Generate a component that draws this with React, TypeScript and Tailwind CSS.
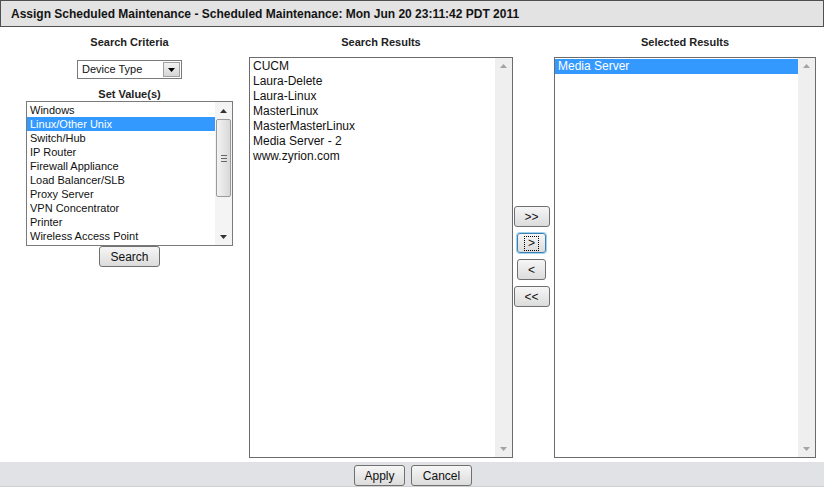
const deviceTypes = [
  "Windows",
  "Linux/Other Unix",
  "Switch/Hub",
  "IP Router",
  "Firewall Appliance",
  "Load Balancer/SLB",
  "Proxy Server",
  "VPN Concentrator",
  "Printer",
  "Wireless Access Point",
]

const searchResults = [
  "CUCM",
  "Laura-Delete",
  "Laura-Linux",
  "MasterLinux",
  "MasterMasterLinux",
  "Media Server - 2",
  "www.zyrion.com",
]

function Arrow({ up, color }: { up?: boolean; color: string }) {
  return (
    <svg width="7" height="4" viewBox="0 0 7 4">
      <polygon points={up ? "0,4 7,4 3.5,0" : "0,0 7,0 3.5,4"} fill={color} />
    </svg>
  )
}

function Button({ label, className = "", focused = false }: { label: string; className?: string; focused?: boolean }) {
  return (
    <button
      className={`flex items-center justify-center rounded-[3px] border bg-gradient-to-b from-[#f6f6f6] to-[#dcdcdc] text-[12px] text-[#111] ${
        focused ? "border-[#3c7fb1] shadow-[0_0_0_1px_#9dd2f0]" : "border-[#707070]"
      } ${className}`}
    >
      {focused ? <span className="border border-dotted border-black px-[3px] leading-[13px]">{label}</span> : label}
    </button>
  )
}

function BigList({ items, selected }: { items: string[]; selected?: number }) {
  return (
    <div className="flex h-[401px] border border-[#6b6b6b] bg-white">
      <div className="flex-1 pt-[1px] text-[12px] leading-[15px] text-[#111]">
        {items.map((item, i) => (
          <div key={item} className={`px-[3px] ${i === selected ? "bg-[#3399ff] text-white" : ""}`}>
            {item}
          </div>
        ))}
      </div>
      <div className="flex w-[17px] flex-col items-center justify-between bg-[#efefef] py-[6px]">
        <Arrow up color="#a3a3a3" />
        <Arrow color="#a3a3a3" />
      </div>
    </div>
  )
}

export default function App() {
  return (
    <div className="flex h-[487px] w-[824px] flex-col bg-white font-['Liberation_Sans',Arial,sans-serif] text-[#111]">
      <div className="flex h-[27px] items-center border border-[#4f4f4f] bg-[#e3e3e3] px-[10px] text-[12px] font-bold text-[#141414]">
        Assign Scheduled Maintenance - Scheduled Maintenance: Mon Jun 20 23:11:42 PDT 2011
      </div>

      <div className="flex flex-1 pl-[26px]">
        <div className="flex w-[207px] flex-col items-center">
          <div className="mt-[8px] text-[11px] font-bold leading-[14px] text-[#222]">Search Criteria</div>
          <div className="mt-[11px] flex h-[19px] w-[105px] items-center border border-[#7a7a7a] bg-white pl-[4px] text-[11px]">
            <span className="flex-1">Device Type</span>
            <span className="mr-[1px] flex h-[15px] w-[17px] items-center justify-center border border-[#a0a0a0] bg-gradient-to-b from-[#f2f2f2] to-[#d6d6d6]">
              <Arrow color="#000" />
            </span>
          </div>
          <div className="mt-[8px] text-[11px] font-bold leading-[14px] text-[#222]">Set Value(s)</div>
          <div className="flex h-[145px] w-[207px] border border-[#7a7a7a] bg-white">
            <div className="flex-1 pt-[1px] text-[11px] leading-[14px]">
              {deviceTypes.map((item, i) => (
                <div key={item} className={`px-[3px] ${i === 1 ? "bg-[#3399ff] text-white" : ""}`}>
                  {item}
                </div>
              ))}
            </div>
            <div className="flex w-[17px] flex-col items-center bg-[#f4f4f4]">
              <div className="flex h-[17px] items-center">
                <Arrow up color="#333" />
              </div>
              <div className="flex h-[78px] w-[15px] flex-col items-center justify-center gap-[2px] rounded-[2px] border border-[#9a9a9a] bg-gradient-to-r from-[#f3f3f3] to-[#d9d9d9]">
                <span className="h-px w-[6px] bg-[#666]" />
                <span className="h-px w-[6px] bg-[#666]" />
                <span className="h-px w-[6px] bg-[#666]" />
              </div>
              <div className="flex-1" />
              <div className="flex h-[17px] items-center">
                <Arrow color="#333" />
              </div>
            </div>
          </div>
          <Button label="Search" className="h-[21px] w-[61px]" />
        </div>

        <div className="ml-[16px] flex w-[264px] flex-col">
          <div className="mt-[8px] text-center text-[11px] font-bold leading-[14px] text-[#222]">Search Results</div>
          <div className="mt-[8px]">
            <BigList items={searchResults} />
          </div>
        </div>

        <div className="flex w-[41px] flex-col items-center justify-center pr-[4px] pt-[24px]">
          <Button label=">>" className="h-[21px] w-[36px] text-[10px]" />
          <Button label=">" focused className="mt-[6px] h-[20px] w-[29px] text-[10px]" />
          <Button label="<" className="mt-[6px] h-[21px] w-[29px] text-[10px]" />
          <Button label="<<" className="mt-[6px] h-[21px] w-[36px] text-[10px]" />
        </div>

        <div className="flex w-[262px] flex-col">
          <div className="mt-[8px] text-center text-[11px] font-bold leading-[14px] text-[#222]">Selected Results</div>
          <div className="mt-[8px]">
            <BigList items={["Media Server"]} selected={0} />
          </div>
        </div>
      </div>

      <div className="flex h-[25px] items-end justify-center gap-[6px] border-b border-[#d0d0d0] bg-[#e1e2e6] pl-[2px]">
        <Button label="Apply" className="h-[21px] w-[51px]" />
        <Button label="Cancel" className="h-[21px] w-[61px]" />
      </div>
    </div>
  )
}
